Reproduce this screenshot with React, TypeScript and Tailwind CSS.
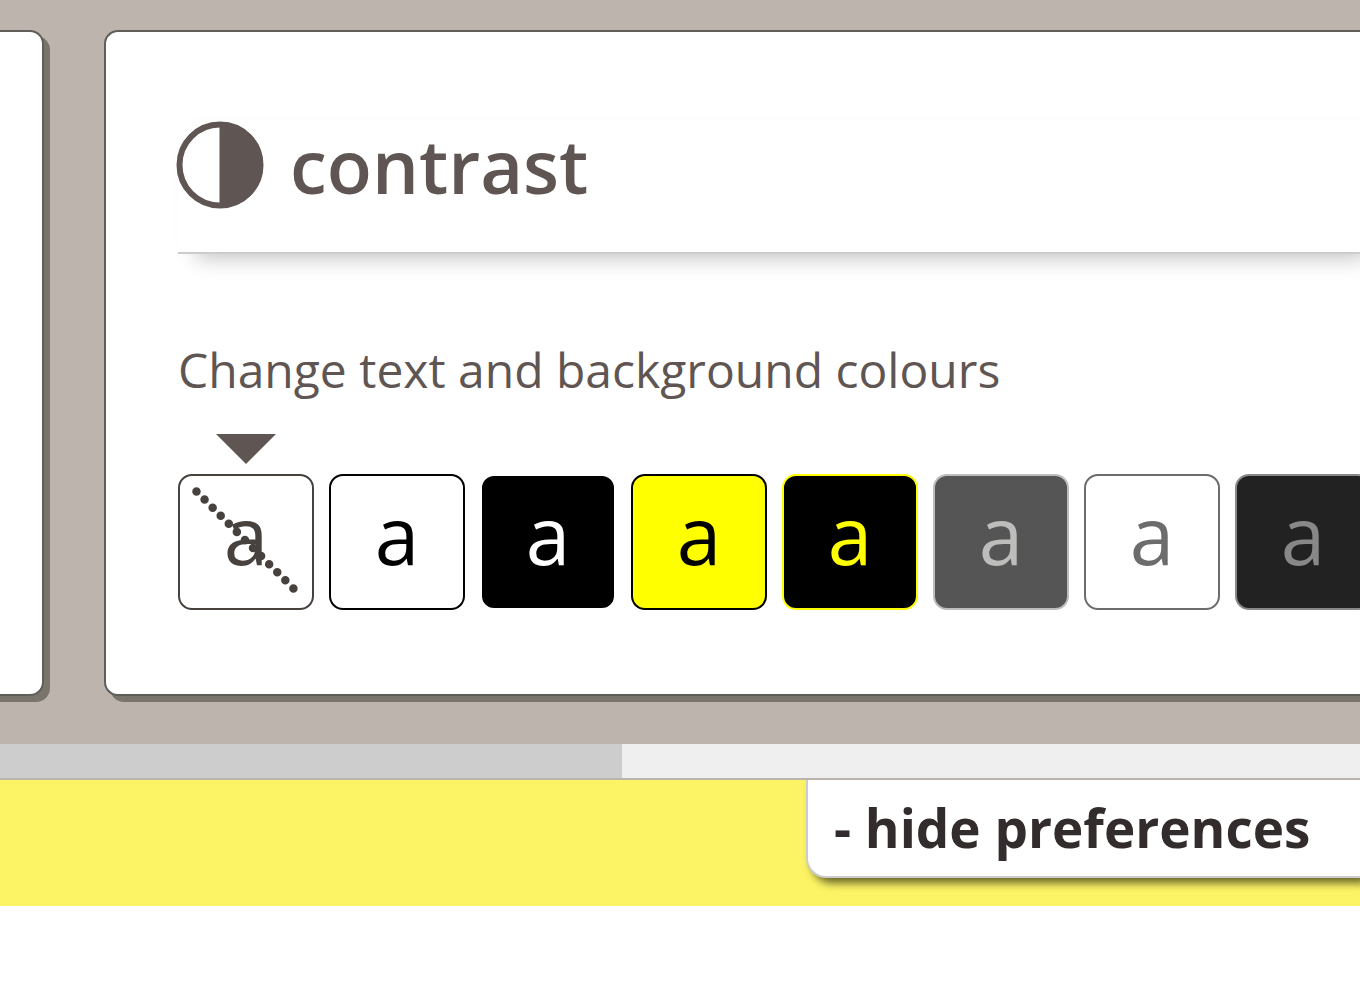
import { useState } from "react";

const themes = [
  { id: "default", label: "Default", style: "border-[#48423f] bg-white text-[#48423f]" },
  { id: "bw", label: "Black on white", style: "border-black bg-white text-black" },
  { id: "wb", label: "White on black", style: "border-white bg-black text-white" },
  { id: "by", label: "Black on yellow", style: "border-black bg-[#ffff00] text-black" },
  { id: "yb", label: "Yellow on black", style: "border-[#ffff00] bg-black text-[#ffff00]" },
  { id: "lgdg", label: "Light grey on dark grey", style: "border-[#bdbdbb] bg-[#555555] text-[#bdbdbb]" },
  { id: "gw", label: "Grey on white", style: "border-[#6c6c6c] bg-white text-[#6c6c6c]" },
  { id: "gd", label: "Grey on dark", style: "border-[#888888] bg-[#222222] text-[#888888]" },
];

function ContrastIcon() {
  return (
    <svg viewBox="0 0 88 88" className="size-[88px] shrink-0" aria-hidden="true">
      <circle cx="44" cy="44" r="40.5" fill="none" stroke="#5f5653" strokeWidth="6" />
      <path d="M43.5 1h.5a43 43 0 0 1 0 86h-.5z" fill="#5f5653" />
    </svg>
  );
}

function ThemeOption({
  theme,
  checked,
  onSelect,
}: {
  theme: (typeof themes)[number];
  checked: boolean;
  onSelect: () => void;
}) {
  return (
    <label
      className={`relative flex size-[136px] shrink-0 cursor-pointer items-center justify-center rounded-[14px] border-2 pb-4 text-[80px] leading-none ${theme.style}`}
    >
      <input
        type="radio"
        name="contrast"
        aria-label={theme.label}
        checked={checked}
        onChange={onSelect}
        className="sr-only"
      />
      {checked && (
        <svg
          viewBox="0 0 60 30"
          className="absolute bottom-full left-1/2 mb-3 h-[30px] w-[60px] -translate-x-1/2"
          aria-hidden="true"
        >
          <path d="M0 0h60L30 30z" fill="#5f5653" />
        </svg>
      )}
      <span aria-hidden="true">a</span>
      {theme.id === "default" && (
        <svg viewBox="0 0 132 132" className="absolute inset-0 size-full" aria-hidden="true">
          <path
            d="M16.5 15.5L113.5 112.5"
            stroke="currentColor"
            strokeWidth="8.5"
            strokeLinecap="round"
            strokeDasharray="0 11.42"
          />
        </svg>
      )}
    </label>
  );
}

export default function App() {
  const [selected, setSelected] = useState("default");

  return (
    <div className="min-h-screen overflow-hidden bg-white font-['Open_Sans',sans-serif] text-[#5f5653]">
      <main className="flex gap-[60px] overflow-hidden bg-[#bcb4ad] pt-[30px] pb-12">
        <section
          aria-label="Previous preference"
          className="-ml-5 w-16 shrink-0 rounded-r-[14px] border-2 border-l-0 border-[#605e59] bg-white shadow-[6px_6px_0_#7a756c]"
        />
        <section className="min-w-0 flex-1 rounded-l-[14px] border-2 border-r-0 border-[#605e59] bg-white shadow-[6px_6px_0_#7a756c]">
          <div className="overflow-hidden pt-[88px] pb-[84px] pl-[72px]">
            <h2 className="flex h-[134px] items-start gap-[26px] border-b-2 border-[#cccccc] text-[74px] leading-[92px] font-semibold shadow-[12px_10px_20px_-6px_rgba(0,0,0,0.24)]">
              <span className="-ml-0.5 pt-px">
                <ContrastIcon />
              </span>
              contrast
            </h2>
            <p className="mt-[84px] text-[48px] leading-[64px] whitespace-nowrap">
              Change text and background colours
            </p>
            <div role="radiogroup" aria-label="Contrast" className="mt-[72px] flex gap-[15px]">
              {themes.map((theme) => (
                <ThemeOption
                  key={theme.id}
                  theme={theme}
                  checked={selected === theme.id}
                  onSelect={() => setSelected(theme.id)}
                />
              ))}
            </div>
          </div>
        </section>
      </main>
      <div className="flex h-9 border-b-2 border-[#bab4ac] bg-[#efefef]">
        <div className="w-[622px] bg-[#cdcdcd]" />
      </div>
      <div className="flex h-[126px] items-start justify-end overflow-hidden bg-[#fcf464]">
        <button
          type="button"
          className="h-[98px] w-[554px] cursor-pointer rounded-bl-[20px] border-b-2 border-l-2 border-[#cccccc] bg-white pl-[26px] text-left text-[53px] leading-[72px] font-bold whitespace-nowrap text-[#322c2c] shadow-[6px_5px_8px_rgba(0,0,0,0.6)]"
        >
          - hide preferences
        </button>
      </div>
    </div>
  );
}
